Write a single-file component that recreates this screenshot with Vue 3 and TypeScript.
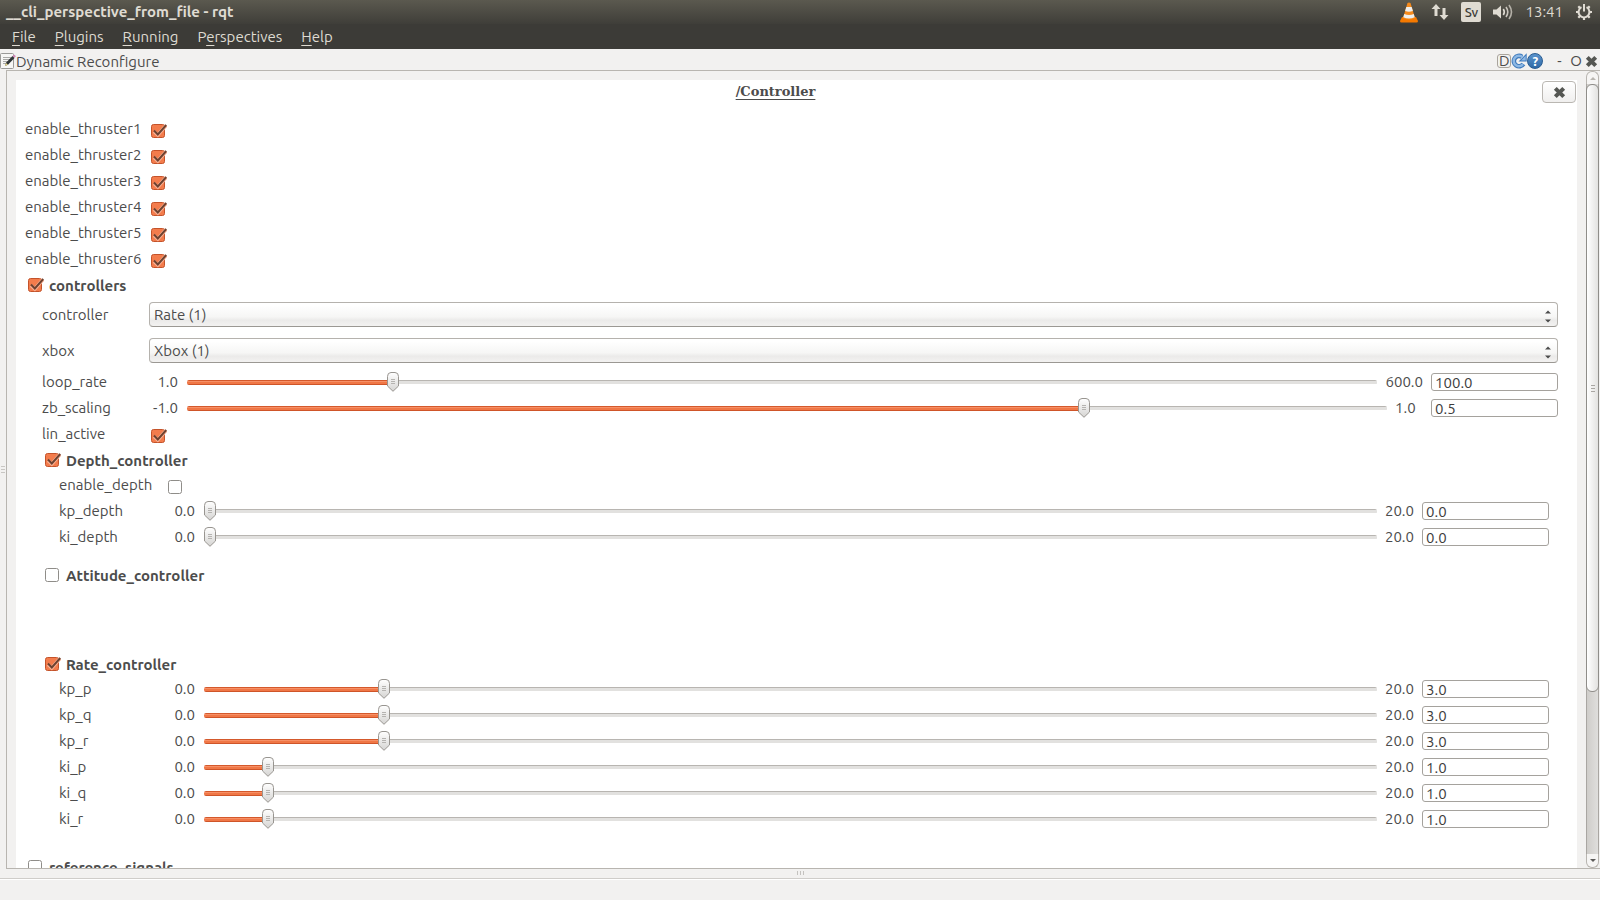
<script setup lang="ts">
import { ref } from 'vue'

type Gap = 'small' | 'medium' | 'large'

type Item = {
  kind: 'check' | 'select' | 'range' | 'group'
  name: string
  level: number
  on?: boolean
  option?: string
  min?: string
  max?: string
  pos?: number
  value?: string
  after?: Gap
}

const check = (name: string, level: number, on = true): Item => ({ kind: 'check', name, level, on })
const group = (name: string, level: number, on: boolean, after?: Gap): Item => ({
  kind: 'group', name, level, on, after,
})
const range = (name: string, level: number, min: string, max: string, pos: number, value: string, after?: Gap): Item => ({
  kind: 'range', name, level, min, max, pos, value, after,
})

const items = ref<Item[]>([
  check('enable_thruster1', 0),
  check('enable_thruster2', 0),
  check('enable_thruster3', 0),
  check('enable_thruster4', 0),
  check('enable_thruster5', 0),
  check('enable_thruster6', 0),
  group('controllers', 0, true),
  { kind: 'select', name: 'controller', level: 1, option: 'Rate (1)' },
  { kind: 'select', name: 'xbox', level: 1, option: 'Xbox (1)' },
  range('loop_rate', 1, '1.0', '600.0', 17, '100.0'),
  range('zb_scaling', 1, '-1.0', '1.0', 75, '0.5'),
  check('lin_active', 1),
  group('Depth_controller', 1, true),
  check('enable_depth', 2, false),
  range('kp_depth', 2, '0.0', '20.0', 0, '0.0'),
  range('ki_depth', 2, '0.0', '20.0', 0, '0.0', 'small'),
  group('Attitude_controller', 1, false, 'large'),
  group('Rate_controller', 1, true),
  range('kp_p', 2, '0.0', '20.0', 15, '3.0'),
  range('kp_q', 2, '0.0', '20.0', 15, '3.0'),
  range('kp_r', 2, '0.0', '20.0', 15, '3.0'),
  range('ki_p', 2, '0.0', '20.0', 5, '1.0'),
  range('ki_q', 2, '0.0', '20.0', 5, '1.0'),
  range('ki_r', 2, '0.0', '20.0', 5, '1.0', 'medium'),
  group('reference_signals', 0, false),
])

const menus = [
  ['', 'F', 'ile'],
  ['', 'P', 'lugins'],
  ['', 'R', 'unning'],
  ['P', 'e', 'rspectives'],
  ['', 'H', 'elp'],
]
</script>

<template>
  <div class="window">
    <header class="titlebar">
      <h1>__cli_perspective_from_file - rqt</h1>
      <div class="tray">
        <svg class="cone" width="20" height="22" viewBox="0 0 20 22">
          <path d="M3 16h14l2 4q0 1.500-1.500 1.500h-15Q1 21.500 1 20z" fill="#f57900" />
          <path d="M8.500 2q1.500-1 3 0l4.500 15q-6 3-12 0z" fill="#f58a1c" />
          <path d="M7.300 6h5.400l1.200 4q-4 1.600-7.800 0z M5.200 13q5 2 9.600 0l.9 3.200q-5.700 2.600-11.400 0z" fill="#eeeeec" />
        </svg>
        <svg width="18" height="18" viewBox="0 0 18 18" fill="#dfdbd2">
          <path d="M5 1l4.500 5H6.500v7h-3V6H.5zM13 17l-4.500-5h3V5h3v7h3z" />
        </svg>
        <span class="lang">Sv</span>
        <svg width="20" height="18" viewBox="0 0 20 18" fill="none" stroke="#dfdbd2" stroke-width="1.600">
          <path d="M0 6.500h3.500L8 2.500v13L3.500 11.500H0z" fill="#dfdbd2" stroke="none" />
          <path d="M10.300 6q2 3 0 6" />
          <path d="M13 4q3.600 5 0 10" opacity=".85" />
          <path d="M16 2q5 7 0 14" opacity=".7" />
        </svg>
        <time>13:41</time>
        <svg width="18" height="18" viewBox="0 0 18 18" fill="none" stroke="#dfdbd2">
          <path d="M6.500 4.200a5.400 5.400 0 1 0 5 0" stroke-width="2" />
          <path d="M9 1v7.500" stroke-width="2" />
          <path d="M1 9h2.500M14.500 9H17M9 14.500V17M3.300 3.300l1.800 1.800M14.700 3.300l-1.800 1.800M3.300 14.700l1.800-1.800M14.700 14.700l-1.800-1.800" stroke-width="2.200" />
        </svg>
      </div>
    </header>

    <nav class="menubar">
      <button v-for="m in menus" :key="m.join('')" type="button">{{ m[0] }}<u>{{ m[1] }}</u>{{ m[2] }}</button>
    </nav>

    <div class="dock-title">
      <svg width="16" height="16" viewBox="0 0 16 16">
        <rect x=".5" y=".5" width="13" height="15" rx="1" fill="#f6f6f5" stroke="#9a9a98" />
        <path d="M3 4.500h8M3 6.500h7M3 8.500h6M3 10.500h3" stroke="#a9a9a7" />
        <path d="M5 13l1.200-3.500L12.500 3l2 2L8 11.700z" fill="#2e3436" />
        <path d="M5 13l1-3 2 1.800z" fill="#e9d98b" />
        <path d="M12.500 3l1-1q1-.5 1.800.4t0 1.700l-.8.900z" fill="#d08ab8" />
      </svg>
      <h2>Dynamic Reconfigure</h2>
      <div class="dock-tools">
        <button type="button" class="dbtn">D</button>
        <button type="button" aria-label="Reload">
          <svg width="16" height="16" viewBox="0 0 16 16">
            <path d="M12.400 11A5.200 5.200 0 1 1 11 3.800" fill="none" stroke="#3f7abc" stroke-width="4.600" />
            <path d="M15.700.3v8.200H7.500z" fill="#3f7abc" />
            <path d="M12 11.200A5.200 5.200 0 1 1 11.700 4.400" fill="none" stroke="#8db8e4" stroke-width="2.400" />
            <path d="M14.700 2.800v4.700H10z" fill="#8db8e4" />
          </svg>
        </button>
        <button type="button" class="help" aria-label="Help">?</button>
      </div>
      <div class="dock-window">
        <button type="button" class="minimize">-</button>
        <button type="button">O</button>
        <button type="button" aria-label="Close dock">
          <svg width="13" height="13" viewBox="0 0 13 13"><path d="M2.300 2.300l8.400 8.400M10.700 2.300l-8.400 8.400" stroke="#555753" stroke-width="4" /></svg>
        </button>
      </div>
    </div>

    <main class="dock">
      <div class="grip-left"><i></i><i></i><i></i></div>
      <div class="scroll-area">
        <div class="page">
          <div class="page-head">
            <h3>/Controller</h3>
            <button type="button" class="close" aria-label="Close">
              <svg width="13" height="13" viewBox="0 0 13 13"><path d="M2.300 2.300l8.400 8.400M10.700 2.300l-8.400 8.400" stroke="#555753" stroke-width="4" /></svg>
            </button>
          </div>

          <div
            v-for="it in items"
            :key="it.name"
            class="row"
            :class="[it.kind, 'level' + it.level, it.after ? 'after-' + it.after : '']"
          >
            <template v-if="it.kind === 'group'">
              <input :id="it.name" v-model="it.on" type="checkbox" />
              <label :for="it.name">{{ it.name }}</label>
            </template>
            <template v-else>
              <label class="name" :for="it.name">{{ it.name }}</label>
              <input v-if="it.kind === 'check'" :id="it.name" v-model="it.on" type="checkbox" />
              <select v-else-if="it.kind === 'select'" :id="it.name">
                <option>{{ it.option }}</option>
              </select>
              <template v-else>
                <span class="min">{{ it.min }}</span>
                <input
                  :id="it.name"
                  v-model.number="it.pos"
                  type="range"
                  min="0"
                  max="100"
                  :style="{ '--pos': it.pos }"
                />
                <span class="max">{{ it.max }}</span>
                <input v-model="it.value" type="text" class="value" :aria-label="it.name + ' value'" />
              </template>
            </template>
          </div>
        </div>
        <div class="scrollbar">
          <button type="button" class="up" aria-label="Scroll up"></button>
          <div class="trough"><div class="thumb"><i></i><i></i><i></i></div></div>
          <button type="button" class="down" aria-label="Scroll down"></button>
        </div>
      </div>
    </main>

    <div class="splitter"><i></i><i></i><i></i></div>
    <footer class="status"></footer>
  </div>
</template>

<style>
body {
  margin: 0;
}
</style>

<style scoped>
* {
  box-sizing: border-box;
}
.window {
  display: flex;
  flex-direction: column;
  height: 100vh;
  overflow: hidden;
  background: #f2f1f0;
  color: #4c4c4c;
  font: 15px/20px Ubuntu, 'Noto Sans', sans-serif;
}
button {
  padding: 0;
  border: 0;
  background: none;
  color: inherit;
  font: inherit;
}
svg {
  display: block;
}
h1,
h2,
h3 {
  margin: 0;
  font-size: 15px;
  font-weight: 400;
}

.titlebar {
  display: flex;
  flex: none;
  align-items: center;
  justify-content: space-between;
  height: 24px;
  padding: 0 7px 0 6px;
  background: linear-gradient(#5b594f, #3f3e39);
  color: #dfdbd2;
}
.titlebar h1 {
  font-weight: 700;
}
.tray {
  display: flex;
  align-items: center;
  gap: 12px;
}
.lang {
  width: 20px;
  height: 20px;
  border-radius: 2px;
  background: #dfdbd2;
  color: #3c3b37;
  font-size: 13px;
  font-weight: 500;
  text-align: center;
}

.menubar {
  display: flex;
  flex: none;
  gap: 19px;
  height: 25px;
  padding: 0 12px;
  background: #3c3b37;
  color: #dfdbd2;
}
.menubar u {
  text-underline-offset: 3px;
}

.dock-title {
  display: flex;
  flex: none;
  align-items: center;
  height: 21px;
  padding: 3px 2px 0 0;
}
.dock-title h2 {
  flex: 1;
  padding-top: 2px;
}
.dock-tools,
.dock-window {
  display: flex;
  align-items: center;
}
.dock-window {
  gap: 3px;
  padding-left: 14px;
}
.minimize {
  width: 10px;
  text-align: left;
}
.dbtn {
  width: 14px;
  height: 14px;
  border: 1px solid #a9a49c;
  border-radius: 3px;
  line-height: 12px;
}
.help {
  width: 16px;
  height: 16px;
  border: 1px solid #2a5d92;
  border-radius: 8px;
  background: linear-gradient(#5b93cc, #2f69a6);
  color: #fff;
  font-size: 13px;
  font-weight: 700;
  line-height: 14px;
}

.dock {
  display: flex;
  flex: 1;
  min-height: 0;
}
.grip-left {
  display: flex;
  flex-direction: column;
  justify-content: center;
  align-items: center;
  gap: 2px;
  width: 6px;
}
.grip-left i {
  width: 4px;
  height: 1px;
  background: #c8c6c3;
}
.scroll-area {
  display: flex;
  flex: 1;
  gap: 9px;
  padding-left: 9px;
  border: 1px solid #b8b5b0;
  border-right: 0;
}
.page {
  flex: 1;
  min-width: 0;
  margin-top: 9px;
  padding: 0 10px 0 9px;
  overflow: hidden;
  background: #fff;
}
.page-head {
  display: flex;
  align-items: flex-start;
  gap: 16px;
  height: 36px;
  padding-top: 1px;
  margin-right: -9px;
}
.page-head h3 {
  flex: 1;
  font: 700 13px/22px 'DejaVu Serif', serif;
  text-align: center;
  text-decoration: underline;
  text-underline-offset: 3px;
}
.close {
  display: grid;
  place-items: center;
  width: 34px;
  height: 22px;
  border: 1px solid #bab7b2;
  border-radius: 4px;
  background: linear-gradient(#fff, #f0efee);
}

.row {
  display: flex;
  align-items: center;
  height: 26px;
}
.row.select {
  height: 36px;
  padding-bottom: 1px;
}
.row.group {
  height: 25px;
  gap: 5px;
  padding-left: 3px;
  font-weight: 700;
}
.group label {
  padding-top: 2px;
}
.level1 {
  padding-right: 9px;
}
.level1:not(.group) {
  padding-left: 17px;
}
.row.group.level1 {
  padding-left: 20px;
}
.level2 {
  padding-left: 34px;
  padding-right: 18px;
}
.after-small {
  margin-bottom: 12px;
}
.after-medium {
  margin-bottom: 22px;
}
.after-large {
  margin-bottom: 64px;
}
.name {
  flex: none;
  width: 107px;
}
.level0 .name {
  width: 124px;
}
.min {
  width: 29px;
  margin-right: 9px;
  text-align: right;
}
.max {
  min-width: 28px;
  margin: 0 8px;
}

input[type='checkbox'] {
  flex: none;
  appearance: none;
  width: 16px;
  height: 16px;
  margin: 0;
  background: url("data:image/svg+xml,%3Csvg xmlns='http://www.w3.org/2000/svg' width='16' height='16'%3E%3Crect x='.5' y='1.500' width='13' height='13' rx='2' fill='%23fff' stroke='%238f8d89'/%3E%3C/svg%3E") no-repeat;
}
input[type='checkbox']:checked {
  background-image: url("data:image/svg+xml,%3Csvg xmlns='http://www.w3.org/2000/svg' width='16' height='16'%3E%3Crect x='.5' y='1.500' width='13' height='13' rx='2' fill='%23f37c4c' stroke='%23c4532a'/%3E%3Cpath d='M3 8.500l3.800 3.500L15 2.500' fill='none' stroke='%23f9b296' stroke-width='3.500'/%3E%3Cpath d='M3 7.500l3.800 4L15.300 2' fill='none' stroke='%236e4230' stroke-width='2'/%3E%3C/svg%3E");
}
.check input[type='checkbox'] {
  margin: 4px 0 0 2px;
}

select {
  flex: 1;
  appearance: none;
  height: 25px;
  padding: 0 4px;
  border: 1px solid #b5b2ad;
  border-bottom-color: #9b9893;
  border-radius: 4px;
  background:
    url("data:image/svg+xml,%3Csvg xmlns='http://www.w3.org/2000/svg' width='6' height='13'%3E%3Cpath d='M0 3.500L3 .5l3 3zM0 9.500l3 3 3-3z' fill='%234c4c4c'/%3E%3C/svg%3E") no-repeat right 6px bottom 3px,
    linear-gradient(#fff 10%, #f6f6f5 60%, #ebeae9 75%, #f3f2f1);
  color: inherit;
  font: inherit;
}

input[type='range'] {
  --fill: calc(6px + (100% - 12px) * var(--pos) / 100);
  flex: 1;
  appearance: none;
  min-width: 0;
  height: 20px;
  margin: 0;
  background: none;
}
input[type='range']::-webkit-slider-runnable-track {
  height: 5px;
  border-radius: 2px;
  background:
    linear-gradient(#d4592c 1px, #f79066 1px, #f79066 2px, #f07746 2px, #f07746 4px, #cf5529 4px) 0 0 / var(--fill) 5px no-repeat,
    linear-gradient(#b8b5b1 1px, #e2e1df 1px, #e2e1df 4px, transparent 4px);
}
input[type='range']::-webkit-slider-thumb {
  appearance: none;
  width: 12px;
  height: 20px;
  margin-top: -8px;
  border: 0;
  border-radius: 0;
  background: url("data:image/svg+xml,%3Csvg xmlns='http://www.w3.org/2000/svg' width='12' height='20'%3E%3ClinearGradient id='g' x2='0' y2='1'%3E%3Cstop stop-color='%23fff'/%3E%3Cstop offset='1' stop-color='%23d5d4d2'/%3E%3C/linearGradient%3E%3Cpath d='M.5 4.500Q.5.500 4 .5h4q3.500 0 3.500 4v9.500L6 19.300.5 14z' fill='url(%23g)' stroke='%23989590'/%3E%3Cpath d='M4 7.500h4M4 9.500h4M4 11.500h4' stroke='%23b5b3b0'/%3E%3C/svg%3E") no-repeat;
}

.value {
  width: 127px;
  height: 18px;
  padding: 0 3px;
  border: 1px solid #a5a29d;
  border-radius: 3px;
  background: #fff;
  color: #3c3c3c;
  font: inherit;
  line-height: 16px;
}

.scrollbar {
  display: flex;
  flex-direction: column;
  width: 14px;
  padding-right: 1px;
}
.up,
.down {
  display: grid;
  place-items: center;
  height: 14px;
  border: 1px solid #b8b5b0;
  background: #f6f5f4;
}
.up {
  height: 13px;
  border-radius: 6px 6px 0 0;
  border-bottom: 0;
}
.down {
  border-radius: 0 0 6px 6px;
  border-top: 0;
}
.up::before,
.down::before {
  content: '';
  border: 3px solid transparent;
}
.up::before {
  margin-bottom: 3px;
  border-bottom-color: #b8b5b0;
}
.down::before {
  margin-top: 3px;
  border-top-color: #5c5b59;
}
.trough {
  flex: 1;
  border: solid #a9a6a2;
  border-width: 0 1px;
  background: linear-gradient(90deg, #cfcdca, #dfdedc);
}
.thumb {
  display: flex;
  flex-direction: column;
  align-items: center;
  justify-content: center;
  gap: 2px;
  height: 79%;
  margin: 0 -1px;
  border: 1px solid #8f8d89;
  border-radius: 6px;
  background: linear-gradient(90deg, #fff, #e3e2e0);
}
.thumb i {
  width: 4px;
  height: 1px;
  background: #a9a6a2;
}

.splitter {
  display: flex;
  flex: none;
  align-items: center;
  justify-content: center;
  gap: 2px;
  height: 9px;
  padding-bottom: 1px;
}
.splitter i {
  width: 1px;
  height: 4px;
  background: #c4c2bf;
}
.status {
  flex: none;
  height: 22px;
  border-top: 1px solid #cfcdca;
  box-shadow: inset 0 1px #fff;
}
</style>
